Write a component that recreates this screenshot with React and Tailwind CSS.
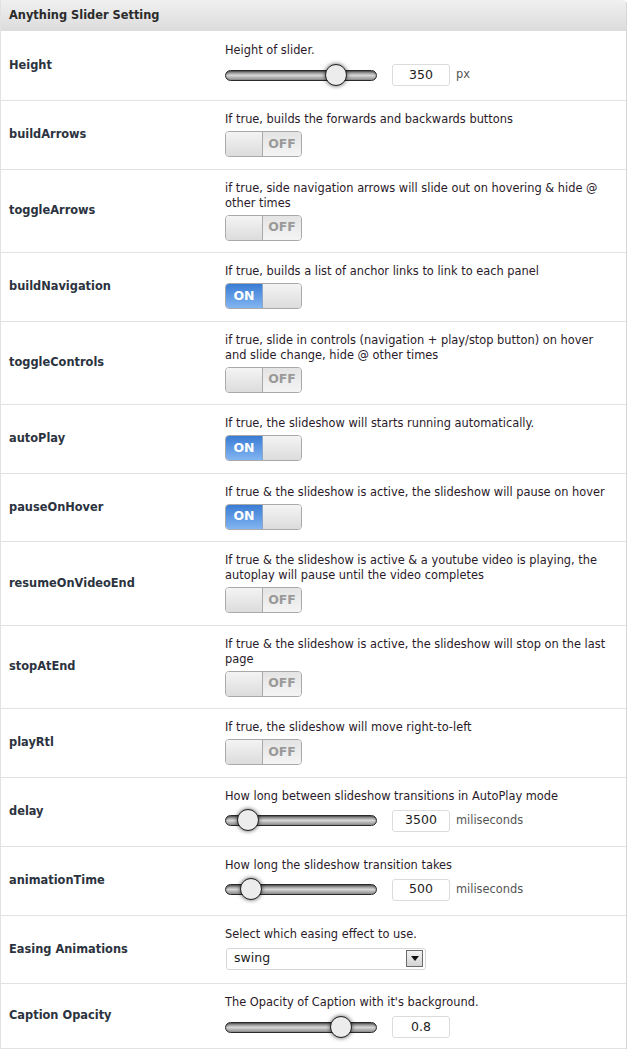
import React from 'react';

const rows = [
    { label: 'Height', desc: 'Height of slider.', type: 'slider', value: '350', unit: 'px', pos: 100 },
    { label: 'buildArrows', desc: 'If true, builds the forwards and backwards buttons', type: 'toggle', on: false },
    { label: 'toggleArrows', desc: 'if true, side navigation arrows will slide out on hovering & hide @ other times', type: 'toggle', on: false },
    { label: 'buildNavigation', desc: 'If true, builds a list of anchor links to link to each panel', type: 'toggle', on: true },
    { label: 'toggleControls', desc: 'if true, slide in controls (navigation + play/stop button) on hover and slide change, hide @ other times', type: 'toggle', on: false },
    { label: 'autoPlay', desc: 'If true, the slideshow will starts running automatically.', type: 'toggle', on: true },
    { label: 'pauseOnHover', desc: 'If true & the slideshow is active, the slideshow will pause on hover', type: 'toggle', on: true },
    { label: 'resumeOnVideoEnd', desc: 'If true & the slideshow is active & a youtube video is playing, the autoplay will pause until the video completes', type: 'toggle', on: false },
    { label: 'stopAtEnd', desc: 'If true & the slideshow is active, the slideshow will stop on the last page', type: 'toggle', on: false },
    { label: 'playRtl', desc: 'If true, the slideshow will move right-to-left', type: 'toggle', on: false },
    { label: 'delay', desc: 'How long between slideshow transitions in AutoPlay mode', type: 'slider', value: '3500', unit: 'miliseconds', pos: 12 },
    { label: 'animationTime', desc: 'How long the slideshow transition takes', type: 'slider', value: '500', unit: 'miliseconds', pos: 15 },
    { label: 'Easing Animations', desc: 'Select which easing effect to use.', type: 'select', value: 'swing' },
    { label: 'Caption Opacity', desc: "The Opacity of Caption with it's background.", type: 'slider', value: '0.8', pos: 105 },
];

const Slider = ({ value, unit, pos }) => (
    <div className="flex items-center h-[26px]">
        <div className="relative w-[152px] h-[11px]">
            <div className="absolute inset-0 rounded-full border border-[#2a2a2a] bg-linear-to-b from-[#7c7c7c] via-[#d6d6d6] to-[#8c8c8c] shadow-[inset_0_1px_2px_rgba(0,0,0,0.4)]" />
            {/* thumb */}
            <div
                className="absolute top-[-6px] w-[22px] h-[22px] rounded-full border border-[#1e1e1e] bg-[#ececec] shadow-[0_0_4px_rgba(0,0,0,0.65)]"
                style={{ left: pos }}
            />
        </div>
        <div className="ml-[15px] w-[58px] h-[22px] rounded-[3px] border border-[#dcdcdc] bg-white flex items-center justify-center text-[12.5px] text-[#222]">
            {value}
        </div>
        {unit && <span className="ml-[6px] text-[11.4px] text-[#555]">{unit}</span>}
    </div>
);

const Toggle = ({ on }) => (
    <div className="flex w-[77px] h-[26px] rounded-[4px] border border-[#a9a9a9] overflow-hidden text-[12.5px] font-bold">
        {on ? (
            <>
                <div className="w-[37px] flex items-center justify-center text-white bg-linear-to-b from-[#3a7cd5] to-[#82b5f1] border-r border-[#8aa7c8]">ON</div>
                <div className="flex-1 bg-linear-to-b from-[#f4f4f4] to-[#dcdcdc]" />
            </>
        ) : (
            <>
                <div className="w-[37px] bg-linear-to-b from-[#f4f4f4] to-[#dcdcdc] border-r border-[#a9a9a9]" />
                <div className="flex-1 flex items-center justify-center text-[#9a9a9a] bg-linear-to-b from-[#e4e4e4] to-[#f4f4f4]">OFF</div>
            </>
        )}
    </div>
);

const Select = ({ value }) => (
    <div className="ml-px flex items-center justify-between w-[200px] h-[22px] rounded-[3px] border border-[#d6d6d6] bg-white pl-[7px] pr-[2px] text-[12.5px] text-[#222]">
        <span>{value}</span>
        <div className="w-[17px] h-[17px] border border-[#6b6b6b] bg-linear-to-b from-[#f2f2f2] to-[#d4d4d4] flex items-center justify-center">
            <svg width="8" height="5" viewBox="0 0 8 5"><path d="M0 0h8L4 5z" fill="#111" /></svg>
        </div>
    </div>
);

export default function App() {
    const last = rows.length - 1;
    return (
        <div className="w-[627px] bg-white font-['DejaVu_Sans',Verdana,sans-serif] text-[#333]">
            <div className="w-[626px] border-l border-b border-[#e2e2e2] rounded-tr-[3px] shadow-[1px_1px_1px_rgba(0,0,0,0.18)]">
                {/* Header */}
                <div className="h-[31px] flex items-center px-[8px] bg-linear-to-b from-[#f0f0f0] to-[#dcdcdc] rounded-tr-[3px] text-[11.4px] font-bold text-[#2b2b2b]">
                    Anything Slider Setting
                </div>

                {rows.map((r, i) => (
                    <div key={i} className={`flex ${i > 0 ? 'border-t border-[#e2e2e2]' : ''}`}>
                        <div className="w-[224px] flex items-center pl-[8px] text-[11.4px] font-bold text-[#2c3340]">
                            {r.label}
                        </div>
                        <div className={`flex-1 pr-[16px] ${i === 0 ? 'pt-[12px]' : 'pt-[11px]'} ${i === last ? 'pb-[8px]' : r.type === 'slider' ? 'pb-[12px]' : 'pb-[11.5px]'}`}>
                            <p className="text-[11.4px] leading-[15px] text-[#2a1a2a] mb-[4px]">{r.desc}</p>
                            {r.type === 'slider' && <Slider value={r.value} unit={r.unit} pos={r.pos} />}
                            {r.type === 'toggle' && <Toggle on={r.on} />}
                            {r.type === 'select' && (
                                <div className="h-[26px] flex items-center"><Select value={r.value} /></div>
                            )}
                        </div>
                    </div>
                ))}
            </div>
        </div>
    );
}
